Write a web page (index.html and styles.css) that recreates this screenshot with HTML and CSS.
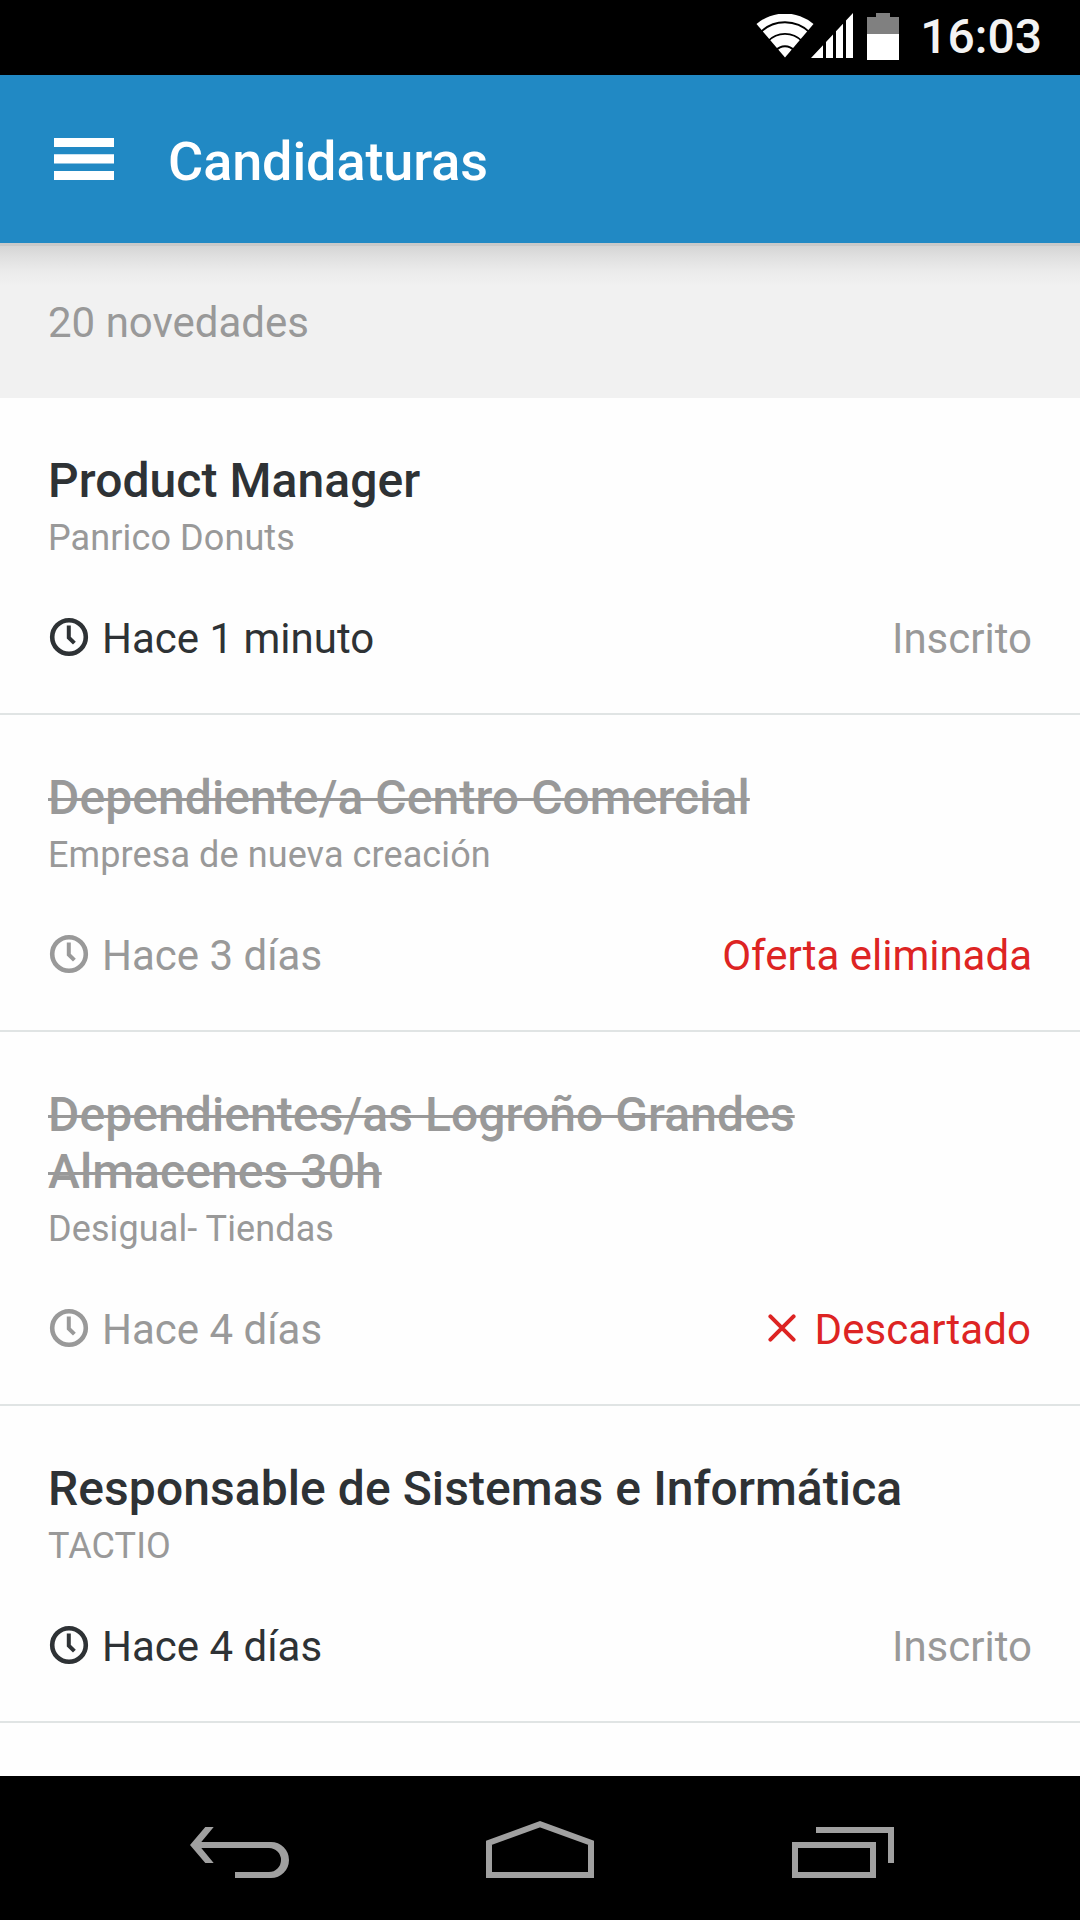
FILE: index.html
```html
<!DOCTYPE html>
<html lang="es">
<head>
<meta charset="utf-8">
<title>Candidaturas</title>
<link rel="stylesheet" href="styles.css">
</head>
<body>
<svg class="sprite" width="0" height="0" aria-hidden="true">
  <symbol id="clock" viewBox="0 0 42 42">
    <circle cx="21" cy="21" r="16.8" fill="none" stroke="currentColor" stroke-width="4.6"/>
    <path d="M20.8 9.4V21.6L26.4 27.2" fill="none" stroke="currentColor" stroke-width="4"/>
  </symbol>
</svg>
<div class="screen">
  <div class="status-bar">
    <svg class="wifi" width="58" height="44" viewBox="0 0 58 44">
      <path d="M29 43.5L.5 10A44 44 0 0 1 57.5 10Z" fill="#fff"/>
      <g fill="none" stroke="#000" stroke-width="1.9">
        <path d="M4 18.7A35.3 35.3 0 0 1 54 18.7"/>
        <path d="M12 27.2A23.3 23.3 0 0 1 46 27.2"/>
        <path d="M20 36.5A11.6 11.6 0 0 1 38 36.5"/>
      </g>
    </svg>
    <svg class="signal" width="42" height="45" viewBox="0 0 42 45">
      <path d="M0 45L12 32.2V45ZM15 45V29L22 21.5V45ZM25 45V18.3L32 10.8V45ZM35 45V7.5L42 0V45Z" fill="#fff"/>
    </svg>
    <svg class="battery" width="32" height="47" viewBox="0 0 32 47">
      <path d="M0 4H9V0H23V4H32V21H0Z" fill="#808080"/>
      <path d="M0 21H32V47H0Z" fill="#fff"/>
    </svg>
    <span class="time">16:03</span>
  </div>

  <header class="app-bar">
    <svg class="menu" width="60" height="42" viewBox="0 0 60 42">
      <path d="M0 0H60V9H0ZM0 16.3H60V25.4H0ZM0 33H60V42H0Z" fill="#fff"/>
    </svg>
    <h1 class="app-title">Candidaturas</h1>
  </header>

  <div class="summary">20 novedades</div>

  <main class="list">
    <article class="item">
      <h2 class="job">Product Manager</h2>
      <p class="company">Panrico Donuts</p>
      <div class="meta">
        <span class="when"><svg class="clock"><use href="#clock"/></svg>Hace 1 minuto</span>
        <span class="state">Inscrito</span>
      </div>
    </article>
    <article class="item closed">
      <h2 class="job">Dependiente/a Centro Comercial</h2>
      <p class="company">Empresa de nueva creación</p>
      <div class="meta">
        <span class="when"><svg class="clock"><use href="#clock"/></svg>Hace 3 días</span>
        <span class="state rejected">Oferta eliminada</span>
      </div>
    </article>
    <article class="item closed">
      <h2 class="job">Dependientes/as Logroño Grandes<br>Almacenes 30h</h2>
      <p class="company">Desigual- Tiendas</p>
      <div class="meta">
        <span class="when"><svg class="clock"><use href="#clock"/></svg>Hace 4 días</span>
        <span class="state rejected discarded"><svg class="cross" width="28" height="28" viewBox="0 0 28 28"><path d="M2.4 2.4L25.6 25.6M25.6 2.4L2.4 25.6" fill="none" stroke="currentColor" stroke-width="4" stroke-linecap="round"/></svg>Descartado</span>
      </div>
    </article>
    <article class="item">
      <h2 class="job">Responsable de Sistemas e Informática</h2>
      <p class="company">TACTIO</p>
      <div class="meta">
        <span class="when"><svg class="clock"><use href="#clock"/></svg>Hace 4 días</span>
        <span class="state">Inscrito</span>
      </div>
    </article>
  </main>

  <nav class="nav-bar">
    <svg width="99" height="51" viewBox="0 0 99 51">
      <path d="M0 18L15.3 0H23.7L11.3 15H81A18 18 0 0 1 81 51H45V45H79A12 12 0 0 0 79 21H11.3L23.7 36H15.3Z" fill="#a0a0a0"/>
    </svg>
    <svg width="108" height="57" viewBox="0 0 108 57">
      <path d="M3 54V21.8L54 3.3L105 21.8V54Z" fill="none" stroke="#a0a0a0" stroke-width="6"/>
    </svg>
    <svg width="102" height="51" viewBox="0 0 102 51">
      <path d="M3 18H81V48H3ZM24 3H99V36" fill="none" stroke="#a0a0a0" stroke-width="6"/>
    </svg>
  </nav>
</div>
</body>
</html>
```
FILE: styles.css
```css
* {
  box-sizing: border-box;
}

body {
  margin: 0;
  font-family: Roboto, sans-serif;
  color: #2e3235;
  background: #fefefe;
}

h1,
h2,
p {
  margin: 0;
}

svg {
  display: block;
  flex: none;
}

.sprite {
  display: none;
}

.screen {
  display: flex;
  flex-direction: column;
  width: 1080px;
  height: 1920px;
  overflow: hidden;
}

.status-bar {
  display: flex;
  justify-content: flex-end;
  align-items: flex-start;
  height: 75px;
  padding: 13px 38px 0 0;
  background: #000;
}

.wifi {
  margin: 1px -3px 0 0;
}

.signal {
  margin-right: 14px;
}

.battery {
  margin-right: 21px;
}

.time {
  font-size: 48px;
  font-weight: 500;
  line-height: 48px;
  color: #f3f3f3;
}

.app-bar {
  display: flex;
  align-items: flex-start;
  gap: 54px;
  height: 168px;
  padding: 63px 54px 0;
  background: #2189c4;
}

.app-title {
  margin-top: -7px;
  font-size: 54px;
  font-weight: 500;
  line-height: 62px;
  letter-spacing: -0.1px;
  color: #fff;
}

.summary {
  height: 155px;
  padding: 55px 48px 0;
  font-size: 42px;
  line-height: 50px;
  color: #999;
  background: linear-gradient(#c9c9c9 0 3px, #d5d5d5 3px, #e0e0e0 14px, #ebebeb 28px, #f1f1f1 43px);
}

.list {
  flex: 1;
}

.item {
  padding: 54px 48px 49px;
  border-bottom: 2px solid #e0e4e4;
}

.job {
  font-size: 48px;
  font-weight: 500;
  line-height: 57px;
  letter-spacing: 0.07px;
}

.company {
  margin-top: 8px;
  font-size: 36px;
  line-height: 43px;
  letter-spacing: 0.1px;
  color: #999;
}

.meta {
  display: flex;
  justify-content: space-between;
  margin-top: 54px;
  font-size: 42px;
  line-height: 50px;
}

.when,
.state {
  display: flex;
}

.when {
  gap: 12px;
}

.clock {
  width: 42px;
  height: 42px;
  margin-top: 2px;
}

.state {
  gap: 19px;
  color: #999;
}

.discarded {
  padding-right: 1px;
  letter-spacing: 0.06px;
}

.cross {
  margin-top: 9px;
}

.closed .job {
  text-decoration: line-through;
  text-decoration-thickness: 3px;
}

.closed .job,
.closed .when {
  color: #999;
}

.state.rejected {
  color: #dd2423;
}

.nav-bar {
  display: flex;
  justify-content: space-between;
  align-items: flex-end;
  height: 144px;
  padding: 0 186px 42px 190px;
  background: #000;
}

.nav-bar svg:nth-child(2) {
  margin-right: 1px;
}
```
